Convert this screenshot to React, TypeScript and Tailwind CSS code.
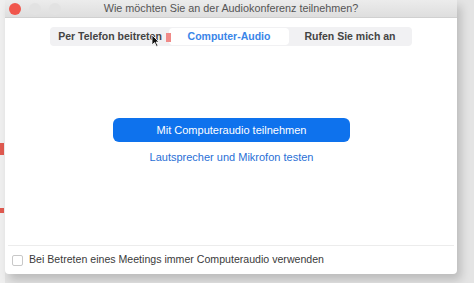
import React from 'react';

export default function App() {
  return (
    <div className="relative w-[474px] h-[283px] bg-[#e4e4e4] overflow-hidden font-['Liberation_Sans',sans-serif]">
      {/* Background app peeking out on the left */}
      <div className="absolute left-0 top-0 w-[5px] h-full bg-[#efefef]">
        <div className="absolute left-0 top-[143px] w-[4px] h-[12px] bg-[#e05a50]" />
        <div className="absolute left-0 top-[208px] w-[4px] h-[5px] bg-[#e05a50]" />
      </div>

      {/* Dialog window */}
      <div className="absolute left-[5px] top-0 w-[452px] h-[274px] bg-white rounded-b-[4px] shadow-[4px_6px_10px_rgba(0,0,0,0.18)] flex flex-col">
        {/* Title bar */}
        <div className="relative h-[18px] bg-gradient-to-b from-[#ececec] to-[#dedede] border-b border-[#d0d0d0] flex items-center justify-center">
          <div className="absolute left-[4px] top-[3px] flex gap-[8px]">
            <span className="w-[12px] h-[12px] rounded-full bg-[#f0564c]" />
            <span className="w-[12px] h-[12px] rounded-full bg-[#e2e2e2]" />
            <span className="w-[12px] h-[12px] rounded-full bg-[#e2e2e2]" />
          </div>
          <span className="text-[10.8px] text-[#555]">Wie möchten Sie an der Audiokonferenz teilnehmen?</span>
        </div>

        {/* Segmented tabs */}
        <div className="mt-[9px] mx-auto w-[362px] h-[19px] bg-[#f1f1f3] rounded-[4px] flex items-center p-[1px] text-[10.5px] font-bold">
          <div className="relative w-[118px] h-full flex items-center justify-center text-[#444]">
            Per Telefon beitreten
            <span className="absolute right-[-2px] top-[5px] w-[5px] h-[9px] bg-[#f08a88]" />
          </div>
          <div className="w-[120px] h-full bg-white rounded-[4px] flex items-center justify-center text-[#3a85e8]">
            Computer-Audio
          </div>
          <div className="flex-1 h-full flex items-center justify-center text-[#444]">
            Rufen Sie mich an
          </div>
        </div>

        {/* Main actions */}
        <div className="mt-[72px] flex flex-col items-center">
          <button className="w-[237px] h-[24px] bg-[#0e72ed] rounded-[6px] text-white text-[11px] ml-[1px]">
            Mit Computeraudio teilnehmen
          </button>
          <a href="#" className="mt-[7px] text-[11px] text-[#2a6fd6] ml-[1px]">
            Lautsprecher und Mikrofon testen
          </a>
        </div>

        {/* Footer */}
        <div className="mt-auto mx-[3px] border-t border-[#ececec] h-[29px] flex items-center gap-[6px] px-[4px]">
          <span className="w-[11px] h-[11px] border border-[#c8c8c8] rounded-[2px] bg-white" />
          <span className="text-[10.6px] text-[#3a3a3a]">Bei Betreten eines Meetings immer Computeraudio verwenden</span>
        </div>
      </div>

      {/* Mouse cursor */}
      <svg className="absolute left-[151px] top-[34px]" width="9" height="13" viewBox="0 0 9 13">
        <path d="M1 1 L1 11 L3.5 8.5 L5.5 12.5 L7 11.8 L5 8 L8 8 Z" fill="#111" stroke="#fff" strokeWidth="0.8" />
      </svg>
    </div>
  );
}
